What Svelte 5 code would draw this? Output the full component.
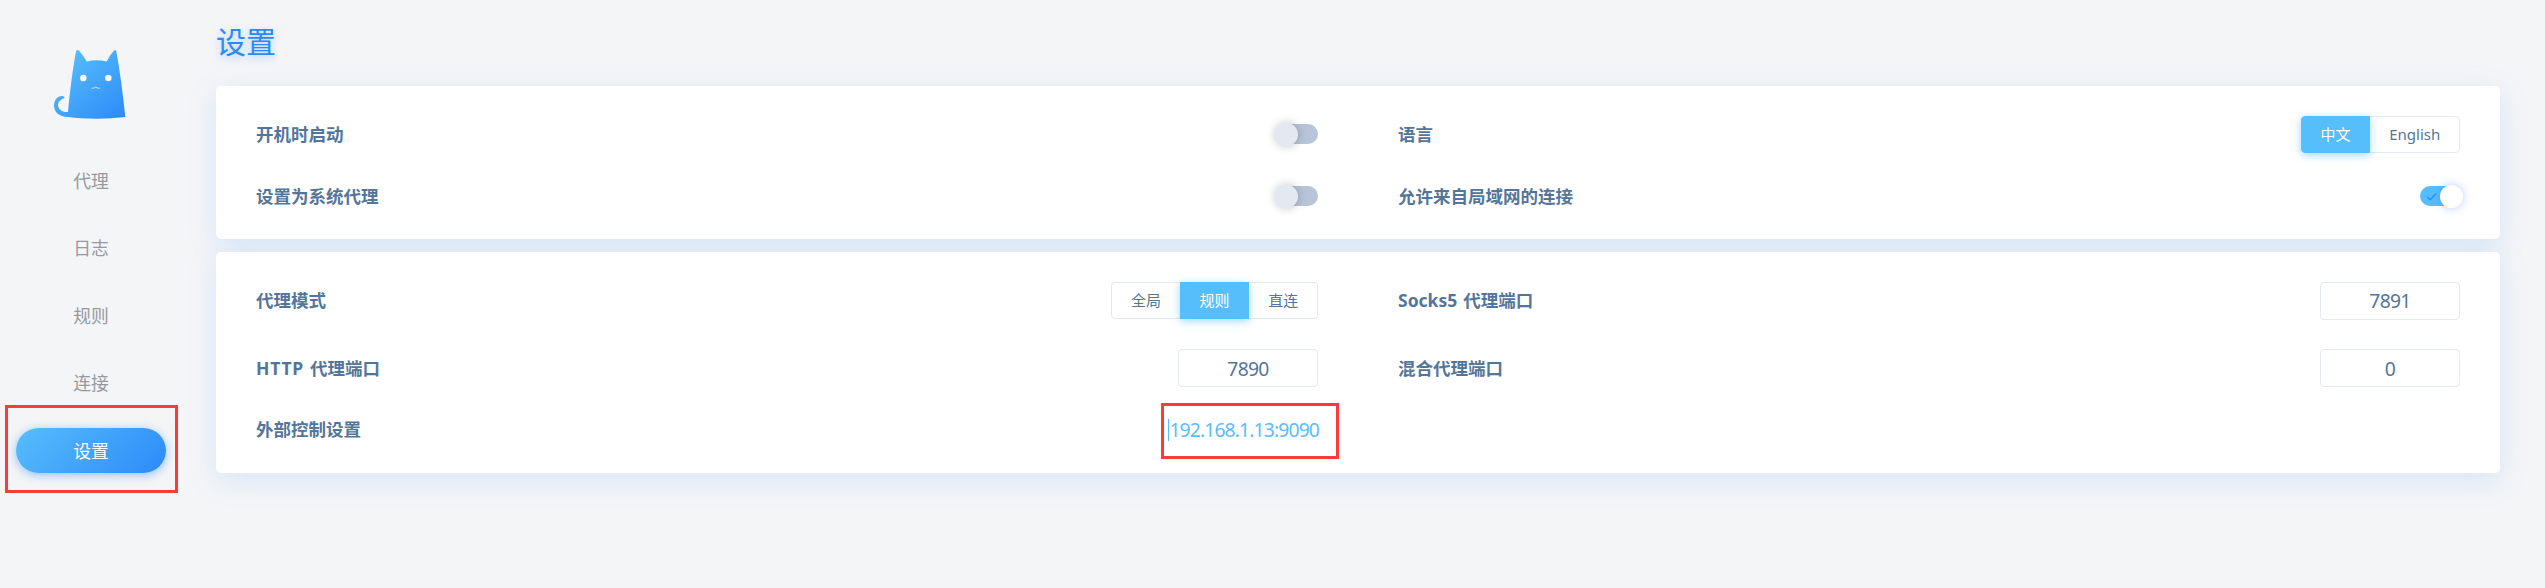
<script>
  const nav = ['代理', '日志', '规则', '连接', '设置'];
  let active = $state('设置');
  let language = $state('中文');
  let mode = $state('规则');
  let startAtBoot = $state(false);
  let systemProxy = $state(false);
  let allowLan = $state(true);
</script>

{#snippet toggle(on, flip)}
  <button class="switch" class:on onclick={flip} aria-label="switch">
    {#if on}
      <svg width="12" height="10" viewBox="0 0 12 10"><path d="M1.2 4.8 4.3 7.8 9.8 1.8" fill="none" stroke="#2c8af8" stroke-width="1.3" /></svg>
    {/if}
    <span class="thumb"></span>
  </button>
{/snippet}

{#snippet group(options, value, pick)}
  <div class="group">
    {#each options as option}
      <button class:selected={option === value} onclick={() => pick(option)}>{option}</button>
    {/each}
  </div>
{/snippet}

<div class="app">
  <aside>
    <svg class="logo" width="80" height="80" viewBox="50 45 80 80">
      <defs>
        <linearGradient id="cat" gradientUnits="userSpaceOnUse" x1="66" y1="54" x2="122" y2="120">
          <stop offset="0" stop-color="#57befc" />
          <stop offset="1" stop-color="#2c8af8" />
        </linearGradient>
      </defs>
      <path fill="url(#cat)" d="M68 112 C70 90 73 67 76 51.5 Q77 48.8 79.4 51 Q83.5 56 86.8 61.5 Q96.5 59.2 106.8 61.5 Q109.5 55.5 113.6 51 Q115.6 48.8 116.4 51.5 C120 72 123 94 125.3 117 Q110 118.8 97 118.7 Q80 118.6 68 117 C59 117 54 112 54 105.5 C54 99 58.5 95.5 62.5 96 Q65.5 96.8 64 98.2 C60.5 99.6 58 101.8 58 105 C58 109.5 62.5 112.5 68 112Z" />
      <circle cx="83.3" cy="78" r="3.2" fill="#fff" />
      <circle cx="108.3" cy="78" r="3.2" fill="#fff" />
      <path d="M91.5 88.2 Q94 88.6 95.7 87.2 Q97.5 88.6 100 88.2" fill="none" stroke="#d5eaff" stroke-width=".9" />
    </svg>
    <nav>
      {#each nav as item}
        <button class:active={item === active} onclick={() => (active = item)}>{item}</button>
      {/each}
    </nav>
  </aside>

  <main>
    <h1>设置</h1>

    <section class="card general">
      <div class="row">
        <span class="label">开机时启动</span>
        {@render toggle(startAtBoot, () => (startAtBoot = !startAtBoot))}
      </div>
      <div class="row">
        <span class="label">语言</span>
        {@render group(['中文', 'English'], language, (v) => (language = v))}
      </div>
      <div class="row">
        <span class="label">设置为系统代理</span>
        {@render toggle(systemProxy, () => (systemProxy = !systemProxy))}
      </div>
      <div class="row">
        <span class="label">允许来自局域网的连接</span>
        {@render toggle(allowLan, () => (allowLan = !allowLan))}
      </div>
    </section>

    <section class="card proxy">
      <div class="row">
        <span class="label">代理模式</span>
        {@render group(['全局', '规则', '直连'], mode, (v) => (mode = v))}
      </div>
      <div class="row">
        <span class="label">Socks5 代理端口</span>
        <input value="7891" />
      </div>
      <div class="row">
        <span class="label"><span class="caps">HTTP</span> 代理端口</span>
        <input value="7890" />
      </div>
      <div class="row">
        <span class="label">混合代理端口</span>
        <input value="0" />
      </div>
      <div class="row">
        <span class="label">外部控制设置</span>
        <span class="address">192.168.1.13:9090</span>
      </div>
    </section>
  </main>

  <div class="mark mark-nav"></div>
  <div class="mark mark-address"></div>
</div>

<style>
  :global(body) {
    background: #f4f5f7;
  }
  .app {
    position: relative;
    display: flex;
    height: 588px;
    overflow: hidden;
    background: #f4f5f7;
    font-family: 'Noto Sans', 'Noto Sans CJK SC', sans-serif;
    color: #54759a;
  }
  button,
  input {
    box-sizing: border-box;
    margin: 0;
    padding: 0;
    border: 0;
    background: none;
    font: inherit;
    color: inherit;
    outline: none;
  }
  aside {
    flex: none;
    width: 182px;
    padding-top: 45px;
    display: flex;
    flex-direction: column;
    align-items: center;
  }
  .logo {
    display: block;
    margin-right: 2px;
  }
  nav {
    display: flex;
    flex-direction: column;
    gap: 22.5px;
    margin-top: 33px;
  }
  nav button {
    width: 150px;
    height: 45px;
    border-radius: 23px;
    font: 400 17.8px/26px 'Noto Sans CJK SC', sans-serif;
    padding-bottom: 2px;
    color: #96999f;
  }
  nav button.active {
    color: #fff;
    background: linear-gradient(135deg, #57befc, #2c8af8);
    box-shadow: 0 2px 10px rgba(44, 138, 248, 0.5);
  }
  main {
    flex: 1;
    padding: 0 45px 0 34px;
  }
  h1 {
    margin: 0;
    height: 86px;
    font: 400 30px/80px 'Noto Sans CJK SC', sans-serif;
    color: #2c8af8;
    text-shadow: 0 3px 8px rgba(44, 138, 248, 0.35);
  }
  .card {
    display: grid;
    grid-template-columns: 1fr 1fr;
    align-content: start;
    box-sizing: border-box;
    border-radius: 5px;
    background: #fff;
    box-shadow: 0 7px 30px rgba(44, 138, 248, 0.15);
  }
  .general {
    height: 153px;
    padding-top: 30px;
    grid-template-rows: 37px 37px;
    row-gap: 24.5px;
  }
  .proxy {
    height: 221px;
    margin-top: 13px;
    padding-top: 15px;
    grid-template-rows: 67px 68px 55px;
  }
  .row {
    display: flex;
    align-items: center;
    justify-content: space-between;
    padding: 0 40px;
  }
  .label {
    font-size: 17.5px;
    font-weight: 700;
    line-height: 24px;
    word-spacing: 1.5px;
    padding-bottom: 1px;
  }
  .caps {
    letter-spacing: 0.8px;
  }
  .switch {
    position: relative;
    width: 40px;
    height: 20px;
    margin-bottom: 1px;
    border-radius: 10px;
    background: #b8c5d8;
  }
  .switch.on {
    background: #57befc;
  }
  .switch svg {
    position: absolute;
    left: 6px;
    top: 6px;
  }
  .thumb {
    position: absolute;
    top: -1px;
    left: -3px;
    width: 23px;
    height: 23px;
    border-radius: 50%;
    background: #e4e8f0;
    box-shadow: 0 0 10px rgba(0, 20, 20, 0.25);
  }
  .on .thumb {
    left: 20px;
    background: #fff;
    box-shadow: 0 0 10px rgba(44, 110, 248, 0.35);
  }
  .group {
    display: flex;
    height: 37px;
  }
  .group button {
    padding: 0 18.8px;
    border: 1px solid #e4e8f0;
    margin-left: -1px;
    font-size: 15px;
    line-height: 33px;
  }
  .group button:first-child {
    margin-left: 0;
    border-radius: 4px 0 0 4px;
  }
  .group button:last-child {
    border-radius: 0 4px 4px 0;
  }
  .group button.selected {
    position: relative;
    color: #fff;
    border-color: #57befc;
    background: #57befc;
    box-shadow: 0 2px 8px rgba(87, 190, 252, 0.6);
  }
  input {
    width: 140px;
    height: 38px;
    border: 1px solid #e4e8f0;
    border-radius: 4px;
    text-align: center;
    font-size: 19.3px;
    letter-spacing: -0.7px;
  }
  .address {
    height: 22px;
    margin-right: -1px;
    border-left: 1px solid #57befc;
    font-size: 19.3px;
    line-height: 21px;
    letter-spacing: -0.85px;
    color: #57befc;
  }
  .mark {
    position: absolute;
    box-sizing: border-box;
    border: 3px solid #fd3a3a;
  }
  .mark-nav {
    left: 5px;
    top: 405px;
    width: 173px;
    height: 88px;
  }
  .mark-address {
    left: 1161px;
    top: 403px;
    width: 178px;
    height: 56px;
  }
</style>
